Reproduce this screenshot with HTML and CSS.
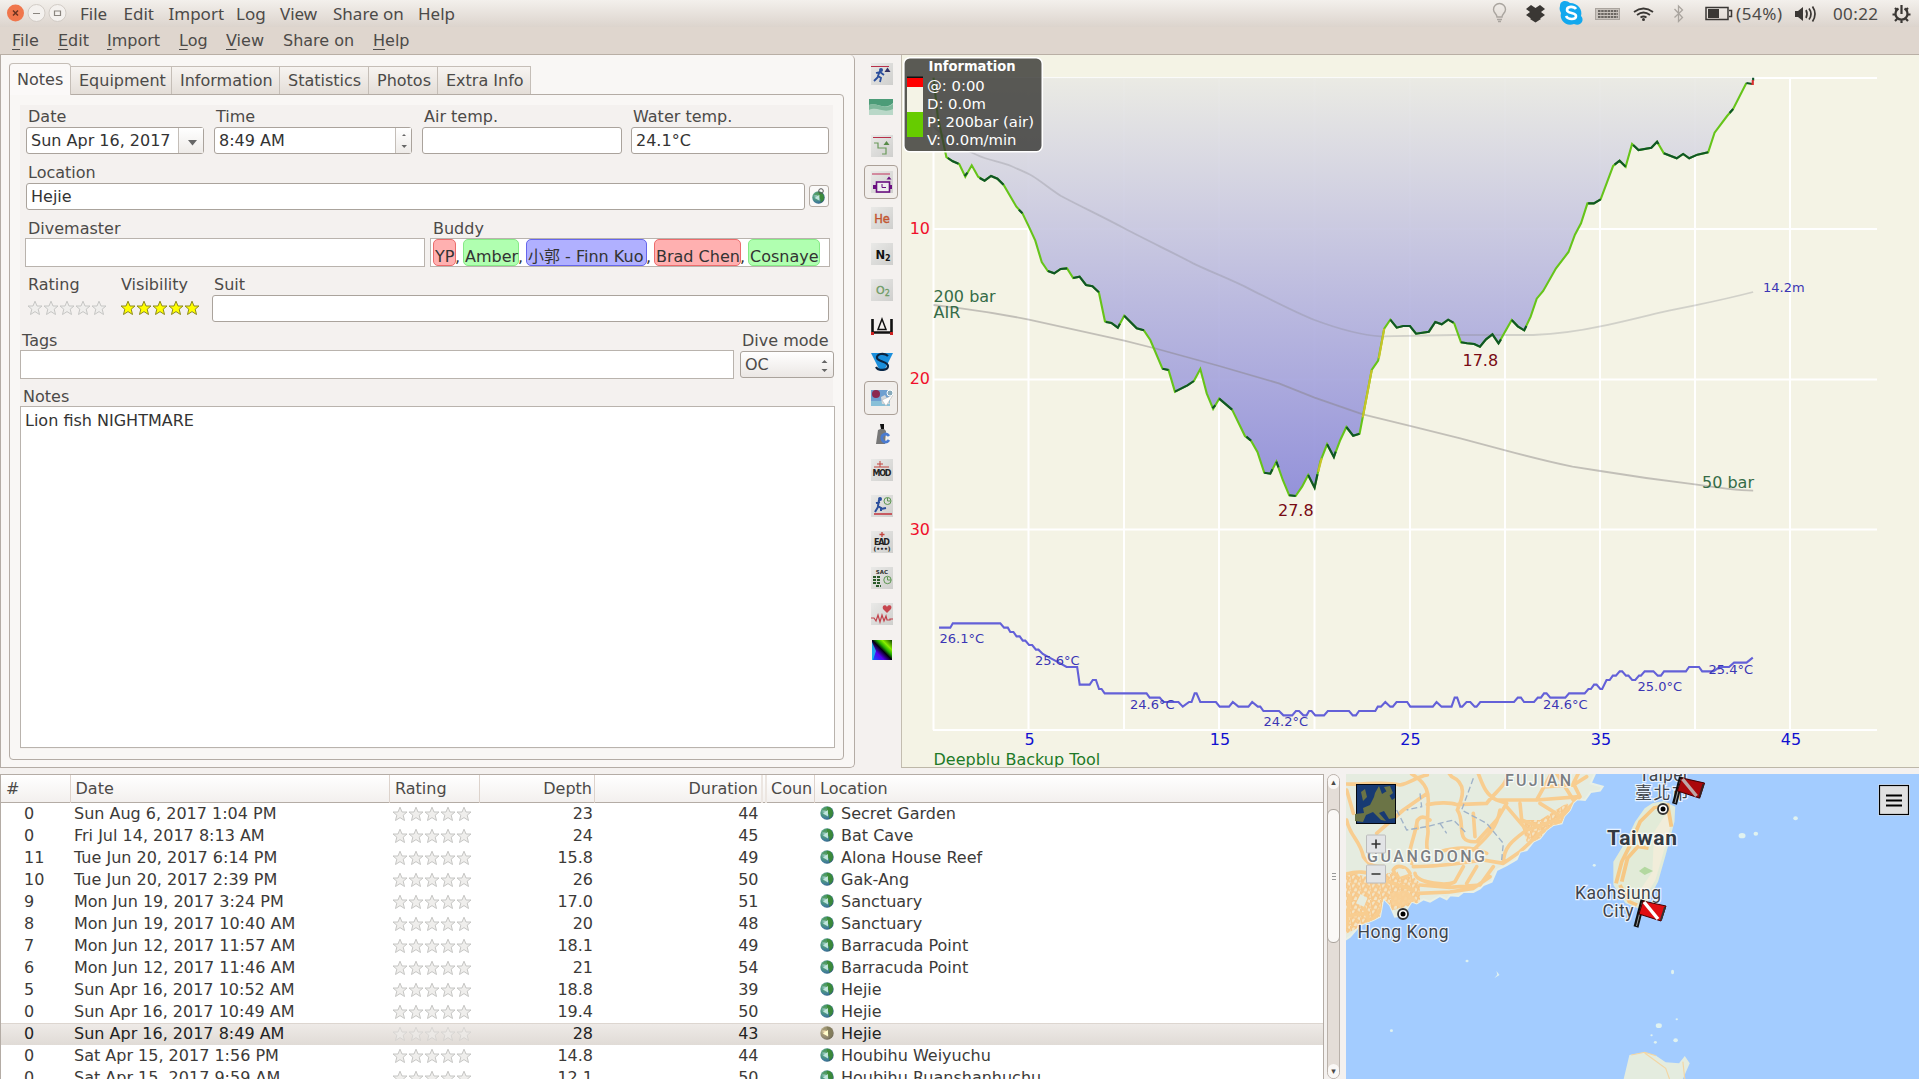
FILE: index.html
```html
<!DOCTYPE html>
<html lang="en">
<head>
<meta charset="utf-8">
<title>Subsurface</title>
<link rel="stylesheet" href="styles.css">
</head>
<body>
<svg class="defs" aria-hidden="true">
  <defs>
    <radialGradient id="globeFill" cx=".35" cy=".35" r=".75"><stop offset="0" stop-color="#a8d4cc"/><stop offset=".4" stop-color="#4f9a80"/><stop offset=".75" stop-color="#3f7a9a"/><stop offset="1" stop-color="#24506a"/></radialGradient>
    <linearGradient id="tile" x2="1" y2="1"><stop offset="0" stop-color="#e9e9e7"/><stop offset="1" stop-color="#cfcfcd"/></linearGradient>
    <symbol id="star" viewBox="0 0 16 16"><path d="M8 1.2 10 6h5l-3.800 3.200 1.300 5.300L8 11.600l-4.500 2.900 1.300-5.300L1 6h5z"/></symbol>
    <symbol id="stars" viewBox="0 0 80 16"><use href="#star" width="16" height="16"/><use href="#star" x="16" width="16" height="16"/><use href="#star" x="32" width="16" height="16"/><use href="#star" x="48" width="16" height="16"/><use href="#star" x="64" width="16" height="16"/></symbol>
    <symbol id="globe" viewBox="0 0 14 14"><circle cx="7" cy="7" r="6.700" fill="url(#globeFill)"/><path d="M7 .8c4 0 6 3 6 6.200s-2 4.500-4 5.500c0-2 1-3-.5-4.500S7 5 7 .8z" fill="#3a8a2c" opacity=".85"/><path d="M2 4q2-3 5-3v4z" fill="#3f8f4a" opacity=".7"/><path d="M3 7.500l5-3.500v6.500z" fill="#d0eeea" opacity=".85"/></symbol>
  </defs>
</svg>

<header class="topbar">
  <div class="controls">
    <svg width="60" height="20" viewBox="0 0 60 20"><circle cx="8.500" cy="10" r="8.500" fill="#f0764c"/><path d="M6 7.500l5 5m0-5l-5 5" stroke="#6b3320" stroke-width="1.500"/><g fill="#f4f1ee" stroke="#d2ccc6"><circle cx="29.500" cy="10" r="8.500"/><circle cx="50.500" cy="10" r="8.500"/></g><path d="M26 10.500h7M47.500 8h6v4.500h-6z" fill="none" stroke="#8a857f" stroke-width="1.200"/></svg>
  </div>
  <nav class="global-menu"><span>File</span><span>Edit</span><span>Import</span><span>Log</span><span>View</span><span>Share on</span><span>Help</span></nav>
  <svg class="indicators" width="427" height="27" viewBox="1492 0 427 27">
    <g fill="none" stroke="#aaa59f" stroke-width="1.400"><path d="M1497 17c0-3-3.500-4-3.500-7.500a6 6 0 0 1 12 0c0 3.500-3.500 4.500-3.500 7.500zM1497 19.500h5M1498 21.500h3"/></g>
    <path d="M1526 9l5-4 4.500 3 4.500-3 5 4-4 3 4 3-5 3.500-4.500-3-4.500 3-5-3.500 4-3zM1530 19l5.500-3.500L1541 19l-5.500 3.500z" fill="#3a3734"/>
    <path d="M1560 6c0-6 7-6 10-3 8 0 13 7 11 13 4 4 0 11-7 8-8 3-15-4-13-11-1-2-2-4-1-7z" fill="#12a8ee"/><path d="M1576 9c-2-3-9-3-9 1s9 2 9 6-8 4-10 0" fill="none" stroke="#fff" stroke-width="2.600"/>
    <rect x="1595.500" y="8.500" width="24" height="11" fill="#c9c3bd" stroke="#aaa49e"/><path d="M1598 11h20M1598 14h20M1598 17h20" stroke="#6b6762" stroke-width="2.200" stroke-dasharray="2.500 .7"/>
    <g fill="none" stroke="#3a3734" stroke-width="1.800"><path d="M1634 12q9.500-7 19 0M1637 15q6.500-5 13 0M1640.500 17.500q3-2 6 0"/><path d="M1674.500 9l8 8.500-4 4V6l4 4-8 7.500" stroke="#aaa59f" stroke-width="1.300"/></g><circle cx="1643.500" cy="19.500" r="1.500" fill="#3a3734"/>
    <path d="M1706 7.500h22v12h-22zM1729 10.500h2.500v6h-2.500" fill="none" stroke="#3a3734" stroke-width="1.500"/><path d="M1708 9h11v9h-11z" fill="#3a3734"/>
    <text x="1736" y="19.500" textLength="46">(54%)</text>
    <path d="M1795 11h3l5-4v14l-5-4h-3z" fill="#3a3734"/><path d="M1806 10q2 4 0 8M1809 8.500q4 5.500 0 11M1812.500 6.500q5 7.500 0 15" fill="none" stroke="#3a3734" stroke-width="1.700"/>
    <text x="1833" y="19.500" textLength="45">00:22</text>
    <path d="M1898.500 8.500a6 6 0 1 0 6 0M1901.500 5v9M1895.500 14.500h-3M1910.500 14.500h-3M1897 19l-2 2M1906 19l2 2M1901.500 20v3M1897 10l-2-2M1906 10l2-2" fill="none" stroke="#3a3734" stroke-width="2.200"/>
  </svg>
</header>

<nav class="menubar"><span><u>F</u>ile</span><span><u>E</u>dit</span><span><u>I</u>mport</span><span><u>L</u>og</span><span><u>V</u>iew</span><span>Share on</span><span><u>H</u>elp</span></nav>

<main class="upper">
  <section class="editor">
    <div class="tabs"><span class="tab current">Notes</span><span class="tab">Equipment</span><span class="tab">Information</span><span class="tab">Statistics</span><span class="tab">Photos</span><span class="tab">Extra Info</span></div>
    <div class="pane">
      <div class="form">
        <div class="row date-row">
          <div class="field"><label>Date</label><div class="input combo"><span>Sun Apr 16, 2017</span><i><svg width="10" height="6"><path d="M0 0h9L4.500 5.500z"/></svg></i></div></div>
          <div class="field"><label>Time</label><div class="input spin"><span>8:49 AM</span><i><svg width="7" height="17"><path d="M1 4l2-2 2 2zM.5 13h5.500l-2.800 3z"/></svg></i></div></div>
          <div class="field"><label>Air temp.</label><div class="input"></div></div>
          <div class="field"><label>Water temp.</label><div class="input">24.1°C</div></div>
        </div>
        <div class="row location-row">
          <div class="field"><label>Location</label><div class="input">Hejie</div></div>
          <button class="geo"><svg width="14" height="17" viewBox="0 0 14 17"><use href="#globe" y="3" width="13" height="13"/><circle cx="9" cy="3" r="2.300" fill="none" stroke="#555"/></svg></button>
        </div>
        <div class="row crew-row">
          <div class="field"><label>Divemaster</label><div class="box"></div></div>
          <div class="field"><label>Buddy</label><div class="box chips"><b class="red yp">YP</b><s>,</s><b class="green amber">Amber</b><s>,</s><b class="blue kuo">小郭 - Finn Kuo</b><s>,</s><b class="red chen">Brad Chen</b><s>,</s><b class="green cos">Cosnaye</b></div></div>
        </div>
        <div class="row rating-row">
          <div class="field"><label>Rating</label><svg class="stars empty" width="80" height="16"><use href="#stars" width="80" height="16"/></svg></div>
          <div class="field"><label>Visibility</label><svg class="stars full" width="80" height="16"><use href="#stars" width="80" height="16"/></svg></div>
          <div class="field"><label>Suit</label><div class="input"></div></div>
        </div>
        <div class="row tags-row">
          <div class="field"><label>Tags</label><div class="box"></div></div>
          <div class="field"><label>Dive mode</label><div class="input select"><span>OC</span><svg width="7" height="14"><path d="M0.500 4L3.500 1l3 3zM.5 10h6l-3 3z"/></svg></div></div>
        </div>
        <div class="field notes"><label>Notes</label><div class="box area">Lion fish NIGHTMARE</div></div>
      </div>
    </div>
  </section>

  <aside class="tools">
    <span class="tool"><svg viewBox="0 0 22 22"><rect class="t" width="22" height="22"/><path d="M0 3.500h18" stroke="#b8304a"/><path d="M13.500 9l3-4.500 3 4.500z" fill="#336"/><circle cx="10" cy="7" r="2" fill="#2b4f9c"/><path d="M9 8l-2 5 3 2-1 4M7 14l-4 4M5 10l4-1 4 3" fill="none" stroke="#2b4f9c" stroke-width="1.800"/></svg></span>
    <span class="tool"><svg viewBox="0 0 24 22" class="wide"><rect width="24" height="16" fill="#b9d8c8"/><path d="M0 0h24v4C15 12 8 3 0 6z" fill="#4c9c78"/><path d="M0 6c8-3 15 6 24-1v5C14 15 9 7 0 11z" fill="#80b99c"/></svg></span>
    <span class="tool"><svg viewBox="0 0 22 22"><rect class="t" width="22" height="22"/><path d="M2 2.500h18" stroke="#b8304a"/><path d="M3 8h4v5h8v6h-4" fill="none" stroke="#6a9a5a" stroke-width="1.200"/><path d="M12.500 10l3-4 3 4z" fill="#578a48"/></svg></span>
    <span class="tool on"><svg viewBox="0 0 22 22"><rect class="t" width="22" height="22"/><path d="M1 3h18" stroke="#c0305a"/><path d="M15.500 8.500l2.500-3 2.500 3zM2 14h4v4H2zM17 14h4v4h-4z" fill="#6a1080"/><rect x="5.500" y="11" width="13" height="10" fill="#eee" stroke="#6a1080" stroke-width="1.600"/><path d="M11 13v3.500h4" fill="none" stroke="#6a1080"/></svg></span>
    <span class="tool"><svg viewBox="0 0 22 22"><rect class="t" width="22" height="22"/><text x="11" y="15.500" font-size="11.500" fill="#c2552f" stroke="#c2552f" stroke-width=".4">He</text></svg></span>
    <span class="tool"><svg viewBox="0 0 22 22"><rect class="t" width="22" height="22"/><text x="12" y="15.500" font-size="11.500" fill="#111" font-weight="bold">N<tspan font-size="8" dy="2">2</tspan></text></svg></span>
    <span class="tool"><svg viewBox="0 0 22 22"><rect class="t" width="22" height="22"/><text x="12" y="14.500" font-size="11" fill="#6f9c66" stroke="#6f9c66" stroke-width=".3">O<tspan font-size="8" dy="2">2</tspan></text></svg></span>
    <span class="tool"><svg viewBox="0 0 22 22"><path d="M1.500 4v13.500h19V4" fill="none" stroke="#111" stroke-width="2.600"/><path d="M7 14.500h8L11 4z" fill="none" stroke="#111" stroke-width="1.500"/><path d="M0 17h3v3H0zM19 17h3v3h-3z" fill="#c22"/></svg></span>
    <span class="tool"><svg viewBox="0 0 22 22"><path d="M0 2h22l-9 18H9z" fill="#1b8fdc"/><path d="M17 5C13 1 5 3 6 7s11 3 11 8-10 5-12 1" fill="none" stroke="#0c2440" stroke-width="2.200"/></svg></span>
    <span class="tool on"><svg viewBox="0 0 22 22"><rect x="0" y="3" width="19" height="16" fill="#6f9fd0"/><rect y="14" width="19" height="5" fill="#88c0d8"/><circle cx="5" cy="7" r="4" fill="#8c2850"/><path d="M10 10l4-2 5 9h-8z" fill="#d5d8dc"/><path d="M22 8L11 13l4 6z" fill="#fff" stroke="#aaa" stroke-width=".5"/><circle cx="19" cy="6" r="3" fill="#8ab" stroke="#fff"/></svg></span>
    <span class="tool"><svg viewBox="0 0 22 22"><path d="M7 7l5-2 3 3-1 13H5z" fill="#777"/><path d="M9 1h4v5h-3z" fill="#111"/><path d="M18 13c-3-4-8-1-7 3s5 4 7 1" fill="none" stroke="#4a7ad0" stroke-width="2.800"/></svg></span>
    <span class="tool"><svg viewBox="0 0 22 22"><rect class="t" width="22" height="22"/><path d="M9 2v6M6 5h6M3 8h15" stroke="#c2453f"/><text x="11" y="17" font-size="8" fill="#222" font-weight="bold" textLength="19">MOD</text></svg></span>
    <span class="tool"><svg viewBox="0 0 22 22"><rect class="t" width="22" height="22"/><path d="M3 19h18" stroke="#c2303a" stroke-width="1.500"/><circle cx="9" cy="4" r="2" fill="#2b4f9c"/><path d="M8 5l-1 6 3 2v3M7 12l-3 5M5 8l4-1M10 14l5-1" fill="none" stroke="#2b4f9c" stroke-width="2"/><circle cx="16.500" cy="6" r="3.500" fill="none" stroke="#5c9650"/><path d="M16.500 3v3h3" fill="none" stroke="#5c9650"/></svg></span>
    <span class="tool"><svg viewBox="0 0 22 22"><rect class="t" width="22" height="22"/><path d="M11 1v5M8.500 3.500h5" stroke="#c2453f" stroke-width="1.300"/><text x="11" y="13.500" font-size="8" fill="#222" font-weight="bold" textLength="16">EAD</text><text x="11" y="19.500" font-size="6" fill="#222" font-weight="bold">(•••)</text></svg></span>
    <span class="tool"><svg viewBox="0 0 22 22"><rect class="t" width="22" height="22"/><text x="11" y="6.500" font-size="5.500" fill="#333" font-weight="bold">SAC</text><path d="M2 10h8M2 13h8M2 16h8M5 19h5" stroke="#2a5a2a" stroke-width="2" stroke-dasharray="3 1"/><circle cx="16.500" cy="13" r="3.700" fill="none" stroke="#5c9650"/><path d="M16.500 10v3h3.500" fill="none" stroke="#5c9650"/></svg></span>
    <span class="tool"><svg viewBox="0 0 22 22"><rect class="t" width="22" height="22"/><path d="M16 10l-4-4c-1.500-4 3-5 4-2 1-3 6-2 4 2z" fill="#c7464e"/><path d="M0 15h3l2 3 2-6 2 7 2-7 2 6 2-5 1 4h3v-1h3" fill="none" stroke="#c2414a" stroke-width="1.200"/></svg></span>
    <span class="tool"><svg viewBox="0 0 22 22"><linearGradient id="hm" x1="0" y1="1" x2="1" y2="0"><stop offset="0" stop-color="#06f"/><stop offset=".3" stop-color="#50e"/><stop offset=".5" stop-color="#001"/><stop offset=".62" stop-color="#2a0"/><stop offset=".75" stop-color="#8e0"/><stop offset="1" stop-color="#140"/></linearGradient><rect x="1" y="1" width="20" height="20" fill="url(#hm)"/><path d="M1 3l4 9-3 9H1z" fill="#19d0e8" opacity=".8"/></svg></span>
  </aside>

  <section class="profile">
    <svg width="1017" height="712" viewBox="902 55 1017 712">
      <defs><linearGradient id="water" gradientUnits="userSpaceOnUse" x1="0" y1="53" x2="0" y2="1308"><stop offset="0" stop-color="#eaeae4"/><stop offset=".5" stop-color="#bab9df"/><stop offset="1" stop-color="#8d8bd9"/></linearGradient></defs>
      <path class="grid" d="M933 78H1877M933 229H1877M933 379.500H1877M933 529.500H1877M933 730H1877M933.500 78V730M1028.500 78V730M1124 78V730M1219 78V730M1314.500 78V730M1410 78V730M1505 78V730M1600 78V730M1695 78V730M1790 78V730"/>
      <g transform="translate(900.300 60) scale(.35714 .33333)" class="plot">
        <path fill="url(#water)" opacity=".93" d="M93 53 105 170 129 291 147 304 165 312 182 350 200 316 218 350 236 362 254 348 272 356 289 374 325 440 342 460 360 500 378 542 396 606 413 633 431 640 449 627 467 625 484 654 502 650 520 675 538 679 556 697 573 784 591 789 609 803 627 767 662 805 682 811 700 840 734 926 751 930 769 995 804 976 822 963 840 927 858 1000 876 1047 893 1016 929 1049 965 1128 982 1142 1000 1176 1019 1238 1036 1241 1053 1205 1071 1260 1089 1306 1107 1308 1125 1280 1142 1245 1160 1283 1176 1205 1195 1153 1214 1191 1232 1140 1249 1101 1268 1127 1286 1121 1320 930 1338 902 1355 806 1372 779 1390 803 1408 798 1427 798 1444 821 1480 815 1498 786 1516 793 1534 779 1551 790 1570 847 1587 850 1607 852 1623 860 1640 838 1658 823 1675 850 1712 780 1729 799 1747 811 1765 770 1782 716 1800 693 1836 625 1871 576 1889 524 1906 490 1924 430 1942 430 1961 418 1996 318 2014 302 2031 320 2049 252 2067 270 2103 263 2119 245 2138 280 2174 295 2192 282 2209 295 2232 284 2262 277 2280 218 2315 168 2332 147 2369 69 2386 72 2388 53Z"/>
        <path class="avg" d="M93 200C130 240 180 270 215 285 250 303 280 304 310 318 330 328 350 336 370 348 400 368 420 388 450 408 510 442 570 472 627 505 690 541 760 576 820 610 870 636 930 660 980 688 1040 720 1100 754 1160 780Q1270 824 1345 829L1550 825 1772 825Q1870 820 1960 799C2030 784 2090 766 2152 752L2225 736Q2320 715 2388 696"/>
        <path class="press" d="M93 735 170 745Q270 759 360 779L627 842 720 867 893 918 1060 970 1160 1013 1295 1063 1427 1098 1568 1135 1694 1171C1760 1190 1820 1206 1882 1220L1960 1233Q2090 1256 2225 1273 2330 1290 2388 1292"/>
        <path stroke="#66c419" d="M93 53 105 170 129 291 147 304 165 312 182 350 200 316 218 350 236 362 254 348 272 356 289 374 325 440 342 460 360 500 378 542 396 606 413 633 431 640 449 627 467 625 484 654 502 650 520 675 538 679 556 697 573 784 591 789 609 803 627 767 662 805 682 811 700 840 734 926 751 930 769 995 804 976 822 963 840 927 858 1000 876 1047 893 1016 929 1049 965 1128 982 1142 1000 1176 1019 1238 1036 1241 1053 1205 1071 1260 1089 1306 1107 1308 1125 1280 1142 1245 1160 1283 1176 1205 1195 1153 1214 1191 1232 1140 1249 1101 1268 1127 1286 1121 1320 930 1338 902 1355 806 1372 779 1390 803 1408 798 1427 798 1444 821 1480 815 1498 786 1516 793 1534 779 1551 790 1570 847 1587 850 1607 852 1623 860 1640 838 1658 823 1675 850 1712 780 1729 799 1747 811 1765 770 1782 716 1800 693 1836 625 1871 576 1889 524 1906 490 1924 430 1942 430 1961 418 1996 318 2014 302 2031 320 2049 252 2067 270 2103 263 2119 245 2138 280 2174 295 2192 282 2209 295 2232 284 2262 277 2280 218 2315 168 2332 147 2369 69"/>
        <path stroke="#0f5527" d="M133 294 147 304 163 311M180 348 188 338M222 354 236 362 254 348 272 356 289 374M332 449 342 460M413 633 431 640 449 627 467 625M484 654 502 650 520 675 538 679 556 697M575 786 591 789 609 803 615 791M627 767 662 805 682 811M734 926 751 930M769 995 804 976 822 963M874 1045 882 1036M893 1016 929 1049M969 1130 982 1142M1019 1238 1036 1241 1042 1228M1053 1205 1059 1222M1089 1306 1107 1308M1142 1245 1160 1283 1168 1243M1195 1153 1214 1191 1219 1175M1249 1101 1268 1127 1286 1121M1372 779 1390 803 1408 798 1427 798 1444 821 1480 815 1498 786 1516 793 1534 779 1549 788M1570 847 1587 850 1607 852 1623 860 1640 838 1658 823 1675 850 1682 838M1712 780 1729 799 1747 811 1753 798M1926 430 1942 430 1961 418M2000 314 2014 302 2031 320M2052 255 2067 270 2103 263 2119 245 2123 252M2138 280 2174 295 2192 282 2209 295 2232 284 2262 277M2322 159 2332 147M2369 69 2386 72M2388 62V53"/>
        <path stroke="#c8c428" d="M1170 1235 1180 1195M1295 1072 1320 930M1340 895 1355 806"/><path stroke="#d83030" d="M2383 72H2387V60"/>
      </g>
      <g transform="translate(910.300 600) scale(.625 .33333)" class="plot"><path stroke="#6360d8" d="M46 83H64L68 70H144L150 83H156L160 96H165L170 109H175L180 122H184L190 135H195L201 149H205L212 162 222 172 240 190 250 201H267L271 254H287L292 240H297L302 267H306L311 280H378L383 293H399L405 306H429L436 320 446 306H450L455 280H458L464 306H489L495 320H510L516 306 525 320H541L547 306 556 320H560L565 333H590L597 346H611L617 333H622L629 346H634L638 333H642L648 346H662L668 333H702L708 346H713L718 333H744L748 320H753L760 306 768 320H772L778 306H795L800 320H836L842 306 850 320H866L871 293H875L880 320H883L890 306H896L903 320H906L912 306H966L972 293H977L982 306H998L1004 293H1009L1014 280H1018L1024 293H1048L1054 280H1079L1085 267H1089L1094 254H1098L1104 267H1107L1114 240H1119L1124 227H1129L1135 214H1139L1145 227H1149L1155 240H1160L1166 227H1169L1175 214H1189L1196 227H1201L1206 214H1241L1246 201H1262L1267 214H1285L1295 201H1310L1318 188H1338L1348 173"/></g>
      <g class="depths"><text x="930" y="233.500">10</text><text x="930" y="384">20</text><text x="930" y="534.500">30</text></g>
      <g class="minutes"><text x="1029.500" y="745">5</text><text x="1220" y="745">15</text><text x="1410.500" y="745">25</text><text x="1601" y="745">35</text><text x="1791" y="745">45</text></g>
      <g class="temps"><text x="939.500" y="642.500">26.1°C</text><text x="1035" y="664.500">25.6°C</text><text x="1130" y="708.500">24.6°C</text><text x="1263.500" y="726">24.2°C</text><text x="1543" y="708.500">24.6°C</text><text x="1637.500" y="691">25.0°C</text><text x="1708.500" y="673.500">25.4°C</text><text x="1763" y="292">14.2m</text></g>
      <g class="bars"><text x="933.500" y="301.500">200 bar</text><text x="933.500" y="317.500">AIR</text><text x="1702" y="487.500">50 bar</text></g>
      <g class="marks"><text x="1278" y="515.500">27.8</text><text x="1462.500" y="366">17.8</text></g>
      <text x="933.500" y="765" fill="#1e7a28">Deepblu Backup Tool</text>
      <g class="tip"><rect x="903.800" y="57.800" width="138.500" height="94" rx="6" fill="#333330" fill-opacity=".8" stroke="#fff" stroke-width="1.600"/><path d="M907 77h16v10h-16z" fill="#f00"/><path d="M907 76.500h16v1.500h-16z" fill="#111"/><path d="M907 87h16v25h-16z" fill="#f4f3e6"/><path d="M907 112h16v25h-16z" fill="#66cc00"/>
      <text class="tip-title" x="928.500" y="71.300" textLength="87" lengthAdjust="spacingAndGlyphs">Information</text><text x="927" y="90.500">@: 0:00</text><text x="927" y="108.500">D: 0.0m</text><text x="927" y="126.500">P: 200bar (air)</text><text x="927" y="144.500">V: 0.0m/min</text></g>
    </svg>
  </section>
</main>

<section class="lower">
  <div class="dives">
    <div class="dive head"><span>#</span><span>Date</span><span>Rating</span><span>Depth</span><span>Duration</span><span class="count">Coun</span><span>Location</span></div>
    <div class="dive"><span>0</span><span>Sun Aug 6, 2017 1:04 PM</span><svg class="stars"><use href="#stars"/></svg><span>23</span><span>44</span><span></span><span><svg class="g"><use href="#globe"/></svg>Secret Garden</span></div>
    <div class="dive"><span>0</span><span>Fri Jul 14, 2017 8:13 AM</span><svg class="stars"><use href="#stars"/></svg><span>24</span><span>45</span><span></span><span><svg class="g"><use href="#globe"/></svg>Bat Cave</span></div>
    <div class="dive"><span>11</span><span>Tue Jun 20, 2017 6:14 PM</span><svg class="stars"><use href="#stars"/></svg><span>15.8</span><span>49</span><span></span><span><svg class="g"><use href="#globe"/></svg>Alona House Reef</span></div>
    <div class="dive"><span>10</span><span>Tue Jun 20, 2017 2:39 PM</span><svg class="stars"><use href="#stars"/></svg><span>26</span><span>50</span><span></span><span><svg class="g"><use href="#globe"/></svg>Gak-Ang</span></div>
    <div class="dive"><span>9</span><span>Mon Jun 19, 2017 3:24 PM</span><svg class="stars"><use href="#stars"/></svg><span>17.0</span><span>51</span><span></span><span><svg class="g"><use href="#globe"/></svg>Sanctuary</span></div>
    <div class="dive"><span>8</span><span>Mon Jun 19, 2017 10:40 AM</span><svg class="stars"><use href="#stars"/></svg><span>20</span><span>48</span><span></span><span><svg class="g"><use href="#globe"/></svg>Sanctuary</span></div>
    <div class="dive"><span>7</span><span>Mon Jun 12, 2017 11:57 AM</span><svg class="stars"><use href="#stars"/></svg><span>18.1</span><span>49</span><span></span><span><svg class="g"><use href="#globe"/></svg>Barracuda Point</span></div>
    <div class="dive"><span>6</span><span>Mon Jun 12, 2017 11:46 AM</span><svg class="stars"><use href="#stars"/></svg><span>21</span><span>54</span><span></span><span><svg class="g"><use href="#globe"/></svg>Barracuda Point</span></div>
    <div class="dive"><span>5</span><span>Sun Apr 16, 2017 10:52 AM</span><svg class="stars"><use href="#stars"/></svg><span>18.8</span><span>39</span><span></span><span><svg class="g"><use href="#globe"/></svg>Hejie</span></div>
    <div class="dive"><span>0</span><span>Sun Apr 16, 2017 10:49 AM</span><svg class="stars"><use href="#stars"/></svg><span>19.4</span><span>50</span><span></span><span><svg class="g"><use href="#globe"/></svg>Hejie</span></div>
    <div class="dive selected"><span>0</span><span>Sun Apr 16, 2017 8:49 AM</span><svg class="stars"><use href="#stars"/></svg><span>28</span><span>43</span><span></span><span><svg class="g"><use href="#globe"/></svg>Hejie</span></div>
    <div class="dive"><span>0</span><span>Sat Apr 15, 2017 1:56 PM</span><svg class="stars"><use href="#stars"/></svg><span>14.8</span><span>44</span><span></span><span><svg class="g"><use href="#globe"/></svg>Houbihu Weiyuchu</span></div>
    <div class="dive"><span>0</span><span>Sat Apr 15, 2017 9:59 AM</span><svg class="stars"><use href="#stars"/></svg><span>12.1</span><span>50</span><span></span><span><svg class="g"><use href="#globe"/></svg>Houbihu Ruanshanhuchu</span></div>
  </div>
  <div class="scroll"><i class="end">▴</i><i class="gap"></i><i class="thumb"></i><i class="rest"></i><i class="end">▾</i></div>
  <div class="map">
    <svg width="573" height="305" viewBox="1346 774 573 305">
      <defs><pattern id="streets" width="30" height="26" patternUnits="userSpaceOnUse"><path d="M0 8 12 0 30 14M0 22 18 12 30 24M8 26 14 12 22 0M22 26 28 8M2 0 6 26" fill="none" stroke="#f7c88a" stroke-width="5"/></pattern><clipPath id="coast"><path id="cn" d="M0 0H770L752 40 770 45 788 50 780 62 752 66 735 90 712 88 700 98 690 120 672 140 665 160 640 165 620 180 600 205 580 215 560 240 540 245 530 268 500 285 470 300 455 335 430 345 420 355 400 366 370 366 355 378 330 376 320 388 300 378 270 395 250 388 230 400 215 395 205 410 190 435 165 440 150 405 130 385 120 440 100 450 60 465 30 500 0 520Z"/></clipPath></defs>
      <rect x="1346" y="774" width="573" height="305" fill="#a3ccff"/>
      <g transform="translate(1340 770) scale(.33333)">
        <use href="#cn" fill="#e5ece0" stroke="#e9f0e6" stroke-width="6"/>
        <g clip-path="url(#coast)">
          <path d="M0 310 80 320 200 310 240 340 240 400 160 415 100 450 0 500ZM540 150 600 150 680 100 700 120 660 160 590 215 560 215Z" fill="#fae3ba" opacity=".7"/>
          <path d="M0 300 80 320 200 300 240 340 240 400 160 420 100 450 0 500ZM540 150 600 150 680 100 700 120 660 160 590 215 560 215Z" fill="url(#streets)"/>
          <path d="M150 370 200 360 230 390 180 410 155 405Z" fill="#f8cf96" opacity=".9"/>
          <g fill="none" stroke="#f8cd90" stroke-width="11" stroke-linejoin="round" stroke-linecap="round">
            <path d="M215 12C262 40 268 70 264 110L262 170 C270 190 255 210 262 240M320 0 335 20C380 40 370 80 352 120 380 160 340 220 410 215L470 150 500 100 470 90C430 70 425 30 410 0M500 0C510 40 470 60 440 100M262 104C290 98 330 96 350 104L440 100M0 40C60 50 120 30 180 45 210 40 230 20 262 15M470 90H590L720 80M590 90 640 0M650 10 700 90M620 50 700 45 740 20M720 0 700 40 720 80 650 150 560 180 500 110M480 120C470 180 430 210 400 240M560 180C520 210 490 230 490 280M20 60 40 130M20 150C30 200 60 210 70 260 90 290 110 290 130 290M110 190 190 120 262 70M232 150C228 180 220 200 210 240L215 280M270 150C240 130 225 150 232 175M160 300C170 280 200 290 210 310 190 330 165 320 160 300M220 290C300 290 360 280 430 270L490 280 540 245 600 190 670 150 690 110M225 310C230 340 330 350 345 335L370 290M380 340 410 290M240 345 330 352 420 345 460 290M235 370 330 366 400 355 450 320M0 320C40 300 90 300 130 330L220 360M60 380 90 460 120 420M30 380 20 470M0 440 80 430M400 130 405 200M600 100 680 150M540 100 545 150 600 170M440 250C400 230 350 230 300 245"/>
          </g>
          <path d="M62 372 82 385 72 410 48 400ZM170 300 195 296 205 312 180 320Z" fill="#e6ecdf"/>
          <path d="M400 25 365 120 440 160 490 220 485 270M170 120 200 180 260 170 340 150 380 190M240 70 245 110 200 120M300 160 320 190" fill="none" stroke="#9fb2c8" stroke-width="4" stroke-dasharray="18 9"/>
        </g>
      </g>
      <g transform="translate(1320 765) scale(.38197 .33333)">
        <path d="M850 130 870 115 900 108 930 125 928 170 905 270 885 350 862 400 850 450 832 430 800 415 768 360 768 290 800 230 825 170Z" fill="#e2ebd8"/><path d="M912 135 920 175 895 280 878 345 850 400 835 380 870 320 875 200Z" fill="#f1edda"/>
        <path d="M775 355 790 290 812 240 838 170 875 128 910 120 920 185M790 350 805 280 832 245 860 250M785 360 810 410 830 420" fill="none" stroke="#f6c885" stroke-width="10"/><path d="M835 318 850 305 872 318 850 330Z" fill="#b3d8a0"/>
        <path d="M795 942 810 870 850 862 880 872 905 892 940 895 955 873 968 895 950 942Z" fill="#e4ecdf"/><path d="M850 864 905 910 915 942M950 890 955 942M815 870 850 862 880 872" fill="none" stroke="#f3d6a4" stroke-width="3"/>
        <g fill="#e0f2f0"><ellipse cx="1105" cy="212" rx="9" ry="8"/><circle cx="1141" cy="206" r="6"/><circle cx="1245" cy="160" r="6"/><circle cx="385" cy="588" r="4"/><path d="M462 618l8 12-13 9 7-10z"/><ellipse cx="923" cy="621" rx="4" ry="7"/><ellipse cx="887" cy="782" rx="8" ry="7"/><circle cx="931" cy="826" r="6"/><circle cx="187" cy="797" r="4"/><circle cx="934" cy="763" r="3"/><circle cx="868" cy="811" r="3"/><circle cx="718" cy="301" r="4"/><circle cx="878" cy="832" r="4"/></g>
      </g>
      <g class="places"><text x="1505" y="785.500" textLength="66" class="region">FUJIAN</text><text x="1367" y="861.500" textLength="118" class="region">GUANGDONG</text><text x="1357.500" y="937.500" textLength="91">Hong Kong</text><text x="1607" y="845" textLength="70" class="country">Taiwan</text><text x="1575" y="898.500" textLength="86">Kaohsiung</text><text x="1602.500" y="917" textLength="31">City</text><text x="1639" y="780.500" textLength="48">Taipei</text><text x="1635" y="799" textLength="54" class="cjk">臺北市</text></g>
      <g fill="#fff" stroke="#333" stroke-width="1.800"><circle cx="1403" cy="914" r="5"/><circle cx="1663" cy="809" r="5"/></g><circle cx="1403" cy="914" r="2.500"/><circle cx="1663" cy="809" r="2.500"/>
      <g id="flag"><path d="M1643 900 1636 927" stroke="#111" stroke-width="5"/><path d="M1642.500 902 1636.500 926" stroke="#999" stroke-width="1"/><path d="M1643 901 1666 906 1661 921 1639 914Z" fill="#e00d12" stroke="#400" /><path d="M1644 902 1658 919" stroke="#fff" stroke-width="3.500"/><path d="M1665 907l-4 13" stroke="#333" stroke-width="2"/></g>
      <use href="#flag" x="38.500" y="-123"/><path d="M1682 777 1705 783 1700 799 1678 791Z" fill="#400" opacity=".35"/>
      <rect x="1356.500" y="784.500" width="39" height="39" fill="#173a73" stroke="#05080f"/><path d="M1375 793l4-7 3 8 5-3 5 9 3-2v20l-6 1-5-8-5 2 7 8-5-1-8-8-7 3-3 7-8-1v-7l9-1-1-5 7-3 4-8zM1361 792l4-3 2 8-4 4zM1384 787l6-1 3 7-4 3z" fill="#6b7446"/>
      <g fill="#e2e4e6" stroke="#bcbcbc"><rect x="1366.500" y="835" width="19" height="18" rx="1"/><rect x="1366.500" y="865" width="19" height="18" rx="1"/></g><path d="M1371.500 844h9M1376 839.500v9M1371.500 874h9" stroke="#333" stroke-width="1.600"/>
      <rect x="1878.500" y="784.500" width="31" height="31" fill="#fff"/><rect x="1879.500" y="785.500" width="29" height="29" fill="#e0e0e0" stroke="#000" stroke-width="1.200"/><path d="M1886 795.500h16M1886 800.500h16M1886 805.500h16" stroke="#000" stroke-width="2"/>
    </svg>
  </div>
</section>
</body>
</html>
```
FILE: styles.css
```css
* { box-sizing: border-box; }
body { margin: 0; width: 1919px; height: 1079px; overflow: hidden; background: #f4f1ef; color: #4c4a48; font: 16px/22px "DejaVu Sans", "Noto Sans CJK TC", sans-serif; }
span, label, text { white-space: pre; }
svg { display: block; }
.defs { position: absolute; width: 0; height: 0; }

/* title bar and menus */
.topbar { display: flex; height: 27px; background: linear-gradient(#f3f0ec, #dcd4cd); font: 17px/27px "Noto Sans", sans-serif; }
.controls { width: 80px; padding: 3px 0 0 7px; }
.global-menu { display: grid; grid-template-columns: 43.5px 45px 67.5px 44px 53px 85px 60px; }
.indicators { margin-left: auto; }
.indicators text { font-size: 17px; fill: #4c4a48; }
.menubar { display: grid; grid-template-columns: 46px 49px 72px 47px 57px 90px 60px; height: 28px; padding-left: 12px; background: #dfd6ce; border-bottom: 1px solid #b9afa5; line-height: 27px; }
.menubar u { text-underline-offset: 3px; text-decoration-thickness: 1px; }

/* upper half */
.upper { display: flex; height: 713px; }
.editor { width: 855px; padding: 8px 10px 9px 8px; border: 1px solid #b4aca5; border-top: 0; border-radius: 0 5px 5px 0; background: #f9f7f5; }
.tabs { display: grid; grid-template-columns: 62px 101px 108px 89px 69px 93px; height: 31px; align-items: end; }
.tab { height: 28px; padding-left: 8px; border: 1px solid #c5beb7; border-left: 0; border-bottom: 0; background: linear-gradient(#f7f4f1, #e4ded8); line-height: 27px; }
.tab.current { height: 32px; padding-left: 7px; margin-bottom: -1px; border-left: 1px solid #b4aca5; border-radius: 4px 4px 0 0; background: #fbf9f8; line-height: 32px; z-index: 1; }
.pane { height: 666px; border: 1px solid #b4aca5; border-radius: 0 4px 4px 4px; padding: 10px; }
.form { height: 644px; background: #f4f1ef; }
.row { display: flex; height: 56px; padding-left: 6px; }
.field { flex-shrink: 0; }
.field label { display: block; height: 22px; padding: 1px 0 0 2px; }
.input { height: 27px; border: 1px solid #aaa39c; border-radius: 3px; background: #fff; color: #333; padding: 0 0 0 4px; line-height: 25px; display: flex; }
.date-row .field { width: 198px; margin-right: 11px; }
.date-row .field:first-child { width: 178px; margin-right: 10px; }
.date-row .field:nth-child(2) { margin-right: 10px; }
.date-row .field:nth-child(3) { width: 200px; margin-right: 9px; }
.date-row .field:last-child { margin-right: 0; }
.input i { margin-left: auto; height: 100%; border-left: 1px solid #c4beb8; background: linear-gradient(#fff, #eeebe8); }
.combo i { width: 25px; padding: 12px 0 0 9px; }
.spin i { width: 16px; padding: 4px 0 0 5px; }
.input svg { fill: #666; }
.location-row .field { width: 779px; }
.geo { width: 20px; height: 22px; margin: 24px 0 0 4px; padding: 1px 2px; border: 1px solid #b4aca5; border-radius: 3px; background: #faf9f8; }
.box { border: 1px solid #b9b3ad; background: #fff; height: 29px; margin-top: -1px; }
.crew-row { padding-left: 5px; }
.crew-row .field:first-child { width: 400px; margin-right: 5px; }
.crew-row .field:first-child label { padding-left: 3px; }
.crew-row .field:last-child { width: 400px; }
.crew-row .field:last-child label { padding-left: 3px; }
.chips { display: flex; padding-left: 2px; color: #333; }
.chips b { height: 27px; border: 1px solid; border-radius: 5px; font-weight: normal; line-height: 34px; padding-left: 1px; white-space: pre; }
.chips s { width: 7px; text-decoration: none; line-height: 36px; text-indent: -1px; }
.red { background: #ffb0b0; border-color: #ec6c6c !important; }
.green { background: #b0ffb0; border-color: #86ea86 !important; }
.blue { background: #b0b0ff; border-color: #6666ec !important; }
.yp { width: 23px; } .amber { width: 56px; } .kuo { width: 121px; } .chen { width: 87px; } .cos { width: 72px; }
.rating-row .field:nth-child(1) { width: 93px; }
.rating-row .field:nth-child(2) { width: 93px; }
.rating-row .field:nth-child(3) { width: 617px; }
.stars { width: 80px; height: 16px; fill: #efeeec; stroke: #c6c6c4; stroke-width: 1px; }
.field .stars { margin: 5px 0 0 1px; }
.stars.full { fill: #ffff00; stroke: #8c8a20; }
.tags-row { padding: 0; }
.tags-row .field:first-child { width: 714px; margin-right: 6px; }
.tags-row .field:last-child { width: 94px; }
.select { background: linear-gradient(#fff, #ebe7e4); align-items: center; color: #4c4a48; }
.select svg { margin: 3px 0 0 auto; width: 12px; }
.notes label { padding-left: 3px; }
.area { width: 815px; height: 342px; padding: 3px 4px; color: #333; }

/* profile toolbar */
.tools { width: 46px; padding: 1px 0 0 9px; }
.tool { display: flex; width: 36px; height: 36px; align-items: center; justify-content: center; }
.tool svg { width: 22px; height: 22px; }
.tool svg.wide { width: 24px; margin-right: 3px; }
.tool.on { width: 34px; height: 34px; margin: 1px 0; padding-left: 2px; border: 1px solid #aba097; border-radius: 4px; background: #f1eeeb; }
.tool text { text-anchor: middle; }
.t { fill: url(#tile); }

/* dive profile */
.profile { width: 1018px; border-left: 1px solid #c3bdb0; border-bottom: 1px solid #bdb7a8; background: #f4f3e5; }
.grid { stroke: #fff; stroke-width: 2; fill: none; }
.plot path { vector-effect: non-scaling-stroke; stroke-width: 2.1; }
.plot path:not([fill]) { fill: none; }
.plot .avg { stroke: #8a8a90; stroke-opacity: .32; stroke-width: 1.8; }
.plot .press { stroke: #858080; stroke-opacity: .45; stroke-width: 1.8; }
.profile text { font-size: 16px; }
.depths { fill: #f00f2a; text-anchor: end; }
.minutes { fill: #1010d0; text-anchor: middle; }
.profile .temps text { fill: #3b36b4; font-size: 13px; }
.bars { fill: #356b47; }
.marks { fill: #780a14; }
.profile .tip text { fill: #fff; font-size: 14.8px; }
.profile .tip .tip-title { font-size: 14.5px; font-weight: bold; }

/* dive list */
.lower { display: flex; height: 305px; margin-top: 6px; }
.dives { width: 1324px; border: 1px solid #b4aca5; border-bottom: 0; background: #fff; color: #3c3a38; overflow: hidden; }
.dive { display: grid; grid-template-columns: 69.5px 319.5px 90px 115px 172px 48px 1fr; height: 22px; }
.dive > :nth-child(1) { padding-left: 23px; }
.dive > :nth-child(2) { padding-left: 3.5px; }
.dive > :nth-child(3) { margin: 3px 0 0 2px; }
.dive > :nth-child(4) { text-align: right; padding-right: 2px; }
.dive > :nth-child(5) { text-align: right; padding-right: 8.5px; }
.dive > :nth-child(7) { display: flex; padding-left: 5px; }
.g { width: 14px; height: 14px; margin: 3px 7px 0 0; }
.head { height: 28px; line-height: 28px; color: #4c4a48; background: linear-gradient(#fff, #f3f0ee); border-bottom: 1px solid #b4aca5; }
.head > span { border-right: 1px solid #ddd3cc; margin: 0 !important; }
.head > :nth-child(1) { padding-left: 5px; }
.head > :nth-child(2), .head > :nth-child(3) { padding-left: 5px; }
.head > :nth-child(5) { border-right: 6px double #ece6e1; padding-right: 3px; }
.head > .count { padding-left: 4px; overflow: hidden; }
.head > :nth-child(7) { border: 0; }
.selected { background: linear-gradient(#efebe8, #e0dbd6); color: #222; box-shadow: inset 0 1px #ddd6d0; }
.selected .stars { opacity: .5; }
.selected .g { filter: sepia(.9); }

.scroll { display: flex; flex-direction: column; width: 13px; margin: 0 6px 0 3px; border: 1px solid #b9b1aa; border-radius: 7px; background: #e4ddd7; }
.scroll i { display: block; text-align: center; font: normal 9px/14px "DejaVu Sans", sans-serif; }
.end { height: 14px; background: #faf8f6; border-radius: 6px; }
.gap { height: 20px; }
.thumb { height: 134px; border: 1px solid #aaa39c; border-radius: 6px; background: repeating-linear-gradient(#999 0 1px, transparent 1px 3px) center / 4px 7px no-repeat #faf8f6; margin: 0 -1px; }
.rest { flex: 1; }

/* map */
.map { width: 573px; }
.places text { font: 17.500px Roboto, sans-serif; fill: #3f444a; stroke: #fff; stroke-width: 2.500px; stroke-opacity: .75; paint-order: stroke; }
.places .region { font-size: 16px; font-weight: 500; fill: #7b7f84; }
.places .country { font-size: 21px; font-weight: bold; fill: #333a42; }
.places .cjk { font: 17px "Noto Sans CJK TC", sans-serif; }
```
